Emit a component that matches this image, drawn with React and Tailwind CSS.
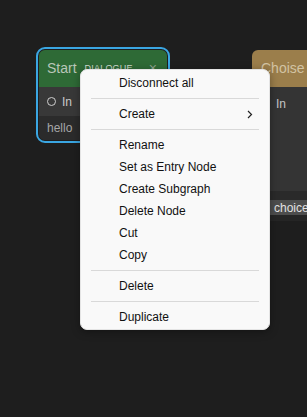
const font = { fontFamily: '"Liberation Sans", Arial, sans-serif' };

const Separator = () => <div className="mx-[10px] my-1 h-px bg-[#d9d9d9]" />;

const Item = ({ label, sub }) => (
  <div className="flex h-[22px] items-center justify-between pl-[38px] pr-[16px] text-[12px] text-[#111]">
    <span>{label}</span>
    {sub && (
      <svg width="6" height="9" viewBox="0 0 6 9" fill="none">
        <path d="M1 1l3.5 3.5L1 8" stroke="#222" strokeWidth="1.2" />
      </svg>
    )}
  </div>
);

const StartNode = () => (
  <div className="absolute left-[36px] top-[47px] h-[96px] w-[134px] rounded-[9px] border-2 border-[#3aa6e2] p-px">
    <div className="flex h-full flex-col overflow-hidden rounded-[6px] bg-[#2b2b2b]">
      <div className="flex h-[37px] items-center bg-[#2e6a36] pl-[8px] pr-[10px]">
        <span className="text-[14px] text-[#b9c6b9]">Start</span>
        <span className="ml-[8px] text-[9px] tracking-[0.2px] text-[#d0dccf]">DIALOGUE</span>
        <span className="ml-auto text-[14px] text-[#8fa58f]">×</span>
      </div>
      <div className="flex h-[29px] items-center gap-[6px] bg-[#383838] pl-[8px]">
        <span className="h-[9px] w-[9px] rounded-full border-[1.5px] border-[#cfcfcf]" />
        <span className="text-[12px] text-[#c9c9c9]">In</span>
      </div>
      <div className="flex flex-1 items-center bg-[#2b2b2b] pl-[8px] text-[12px] text-[#a6a6a6]">
        hello
      </div>
    </div>
  </div>
);

const ChoiceNode = () => (
  <div className="absolute left-[252px] top-[50px] w-[90px]">
    <div className="flex h-[37px] items-center rounded-tl-[6px] bg-[#9b7e4b] pl-[9px] text-[14px] text-[#d2c3a3] whitespace-nowrap">
      Choise Branch
    </div>
    <div className="h-[104px] bg-[#343434] pl-[24px] pt-[8px] text-[12px] text-[#c4c4c4]">In</div>
    <div className="h-[9px] bg-[#2a2a2a]" />
    <div className="flex h-[15px] items-center bg-[#4d4d4d] pl-[22px] text-[12px] text-[#e2e2e2]">choice</div>
    <div className="h-[6px] bg-[#252525]" />
  </div>
);

export default function App() {
  return (
    <div className="relative h-[417px] w-[307px] overflow-hidden bg-[#1e1e1e]" style={font}>
      <StartNode />
      <ChoiceNode />
      <div className="absolute left-[80px] top-[69px] w-[190px] rounded-[7px] border border-[#e4e4e4] bg-[#f9f9f9] pt-[2px] pb-[1px] shadow-[0_2px_8px_rgba(0,0,0,0.35)]">
        <Item label="Disconnect all" />
        <Separator />
        <Item label="Create" sub />
        <Separator />
        <Item label="Rename" />
        <Item label="Set as Entry Node" />
        <Item label="Create Subgraph" />
        <Item label="Delete Node" />
        <Item label="Cut" />
        <Item label="Copy" />
        <Separator />
        <Item label="Delete" />
        <Separator />
        <Item label="Duplicate" />
      </div>
    </div>
  );
}
